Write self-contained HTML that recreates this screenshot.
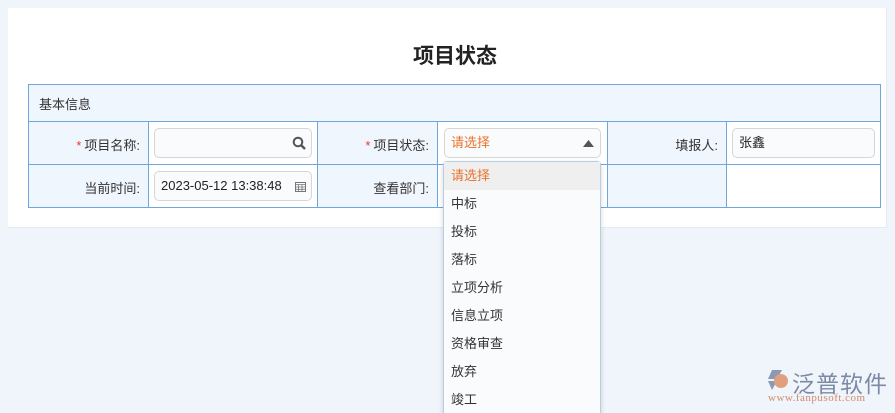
<!DOCTYPE html>
<html style="width:895px;height:413px;overflow:hidden"><head><meta charset="utf-8"><style>
*{box-sizing:border-box;margin:0;padding:0}
body{width:895px;height:413px;background:#f0f5fc;font-family:"Liberation Sans","Noto Sans CJK SC",sans-serif;font-size:13px;color:#333;position:relative;overflow:hidden}
.card{position:absolute;left:8px;top:8px;width:879px;height:220px;background:#fff;border-right:1px solid #e6ebf2;border-bottom:1px solid #e6ebf2}
h1{position:absolute;left:0;width:910px;top:40px;text-align:center;font-size:21px;font-weight:bold;color:#222}
.c{position:absolute;border:1px solid #6fa6dc;background:#f0f6fe}
.w{background:#fff}
.lab{text-align:right;padding-right:8px;padding-top:3px;line-height:42px}
.st{color:#e33;margin-right:3px}
.in{position:absolute;border:1px solid #d6d6d6;border-radius:5px;background:#fafbfc;height:30px;line-height:28px;padding-left:6px}
.dd{position:absolute;left:443px;top:161px;width:158px;height:260px;background:#fafbfc;border:1px solid #b9cde0;border-radius:4px;box-shadow:0 2px 6px rgba(0,0,0,.15)}
.dd div{height:28px;line-height:28px;padding-left:7px}
</style></head><body>
<div class="card"></div>
<h1>项目状态</h1>
<div class="c" style="left:28px;top:84px;width:853px;height:38px;padding:9px 0 0 10px">基本信息</div>
<div class="c lab" style="left:28px;top:121px;width:121px;height:44px"><span class="st">*</span>项目名称:</div>
<div class="c w" style="left:148px;top:121px;width:170px;height:44px"></div>
<div class="c lab" style="left:317px;top:121px;width:121px;height:44px"><span class="st">*</span>项目状态:</div>
<div class="c w" style="left:437px;top:121px;width:171px;height:44px"></div>
<div class="c lab" style="left:607px;top:121px;width:120px;height:44px">填报人:</div>
<div class="c w" style="left:726px;top:121px;width:155px;height:44px"></div>
<div class="c lab" style="left:28px;top:164px;width:121px;height:44px">当前时间:</div>
<div class="c w" style="left:148px;top:164px;width:170px;height:44px"></div>
<div class="c lab" style="left:317px;top:164px;width:121px;height:44px">查看部门:</div>
<div class="c w" style="left:437px;top:164px;width:171px;height:44px"></div>
<div class="c" style="left:607px;top:164px;width:120px;height:44px"></div>
<div class="c w" style="left:726px;top:164px;width:155px;height:44px"></div>
<div class="in" style="left:154px;top:128px;width:158px"><svg style="position:absolute;right:5px;top:7px" width="14" height="14" viewBox="0 0 14 14"><circle cx="6" cy="6" r="4.3" fill="none" stroke="#555" stroke-width="2"/><path d="M9 9l4 4" stroke="#555" stroke-width="2.4"/></svg></div>
<div class="in" style="left:154px;top:171px;width:158px;color:#222">2023-05-12 13:38:48<svg style="position:absolute;right:5px;top:9px" width="11" height="11" viewBox="0 0 11 11"><rect x="0.5" y="1.5" width="10" height="9" fill="none" stroke="#777"/><path d="M0 3.5h11M3.5 3.5v7M7 3.5v7M0 6h11M0 8.3h11" stroke="#777" stroke-width=".8"/></svg></div>
<div class="in" style="left:444px;top:128px;width:157px;color:#e8742c">请选择<svg style="position:absolute;right:6px;top:11px" width="11" height="7"><path d="M0 7L5.5 0 11 7z" fill="#555"/></svg></div>
<div class="in" style="left:732px;top:128px;width:143px;color:#222">张鑫</div>
<div class="dd">
<div style="background:#efefef;color:#e8742c">请选择</div><div>中标</div><div>投标</div><div>落标</div><div>立项分析</div><div>信息立项</div><div>资格审查</div><div>放弃</div><div>竣工</div>
</div>
<svg style="position:absolute;left:765px;top:368px" width="24" height="24" viewBox="0 0 24 24"><path d="M7 2h10l-5 9H3z" fill="#8a9ab5"/><path d="M3 13h9l-5 9z" fill="#8a9ab5"/><circle cx="16" cy="13" r="7" fill="#e0a080"/></svg>
<div style="position:absolute;left:792px;top:365px;font-size:23px;color:#7d8aa5;letter-spacing:1px">泛普软件</div>
<div style="position:absolute;left:768px;top:392px;font-size:11px;color:#d08a6a;font-family:'Liberation Serif',serif;letter-spacing:.5px">www.fanpusoft.com</div>
</body></html>
